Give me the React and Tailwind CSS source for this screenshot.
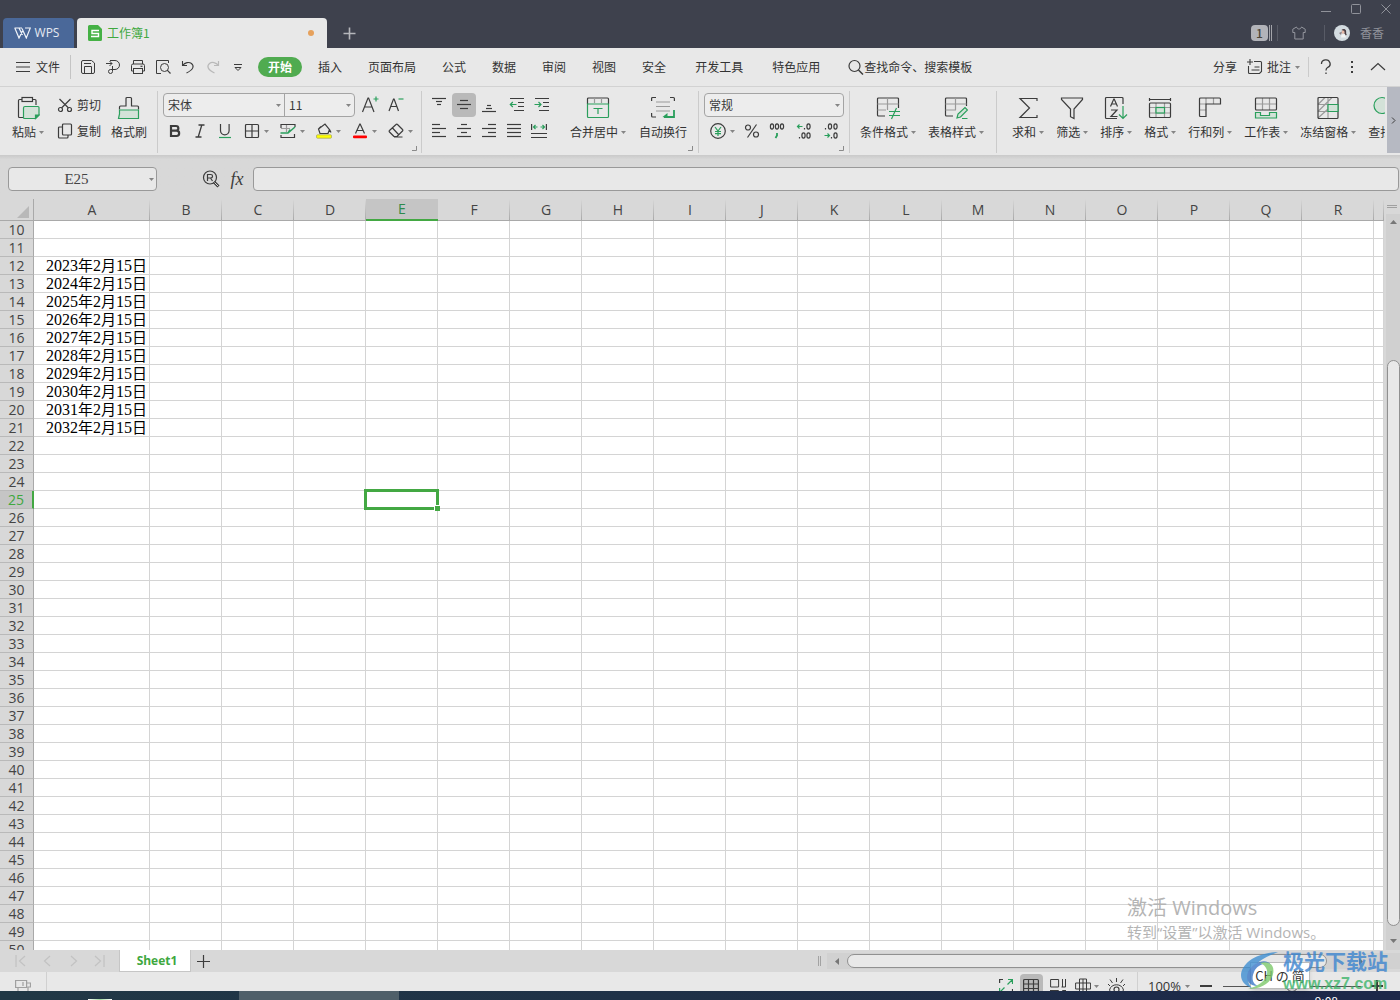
import React, { useState } from 'react';

const COLUMNS = ['A', 'B', 'C', 'D', 'E', 'F', 'G', 'H', 'I', 'J', 'K', 'L', 'M', 'N', 'O', 'P', 'Q', 'R', ''];
const ROWS = Array.from({ length: 41 }, (_, i) => i + 10);

const CELLS = {
  A12: '2023年2月15日',
  A13: '2024年2月15日',
  A14: '2025年2月15日',
  A15: '2026年2月15日',
  A16: '2027年2月15日',
  A17: '2028年2月15日',
  A18: '2029年2月15日',
  A19: '2030年2月15日',
  A20: '2031年2月15日',
  A21: '2032年2月15日',
};

const DARK = '#3c3c3c';
const GREEN = '#2a9f5c';
const GRAY = '#9a9a9a';
const MINT = '#d3e2d8';

const Icon = ({ w = 16, h = 16, children }) => (
  <svg
    width={w}
    height={h}
    viewBox={`0 0 ${w} ${h}`}
    fill="none"
    stroke={DARK}
    strokeWidth="1.2"
    className="shrink-0"
    aria-hidden="true"
  >
    {children}
  </svg>
);

const Caret = () => (
  <svg width="5" height="3" viewBox="0 0 5 3" className="shrink-0" aria-hidden="true">
    <path d="M0 0h5L2.5 3z" fill="#858585" />
  </svg>
);

const Corner = () => (
  <svg width="5" height="5" viewBox="0 0 5 5" className="mt-0.5 self-end" aria-hidden="true">
    <path d="M4.5 0v4.5H0" fill="none" stroke="#8a8a8a" />
  </svg>
);

const Divider = ({ className = '' }) => (
  <div className={`mt-1 h-[62px] w-px shrink-0 bg-[#cbcbcb] ${className}`} />
);

const Group = ({ children, corner, className = '' }) => (
  <div className={`flex shrink-0 flex-col pt-1.5 ${className}`}>
    <div className="flex h-[51px] items-start">{children}</div>
    {corner && <Corner />}
  </div>
);

const BigButton = ({ label, icon, caret = true }) => (
  <button className="flex shrink-0 flex-col items-center px-1.5 pt-[3px]">
    {icon}
    <span className="flex h-6 items-center gap-[3px] whitespace-nowrap">
      {label}
      {caret && <Caret />}
    </span>
  </button>
);

const IconButton = ({ label, active, wide, children }) => (
  <button
    aria-label={label}
    className={`flex h-6 shrink-0 items-center justify-center rounded ${wide ? 'w-7' : 'w-6'} ${
      active ? 'bg-[#b9b9b9]' : ''
    }`}
  >
    {children}
  </button>
);

const CaretButton = ({ label, children }) => (
  <button aria-label={label} className="flex h-6 shrink-0 items-center gap-1 pl-1.5 pr-1">
    {children}
    <Caret />
  </button>
);

const Combo = ({ label, options, className }) => (
  <div className={`relative h-6 ${className}`}>
    <select
      aria-label={label}
      className="h-full w-full appearance-none bg-transparent pl-1 text-xs text-[#3a3a3a] outline-none"
    >
      {options.map((option) => (
        <option key={option}>{option}</option>
      ))}
    </select>
    <span className="pointer-events-none absolute inset-y-0 right-[3px] flex items-center">
      <Caret />
    </span>
  </div>
);

const TitleBar = () => (
  <header className="flex h-12 shrink-0 bg-[#3e414d]">
    <div className="flex items-end pl-[3px]">
      <button className="flex h-[30px] w-[71px] items-center justify-center gap-1 rounded-t bg-[#4a6899] pr-1 font-['Open_Sans',sans-serif] text-xs text-[#e6eaf2]">
        <svg width="17" height="12" viewBox="0 0 17 12" fill="none" stroke="#f1f4f9" strokeWidth="1.2" aria-hidden="true">
          <path d="M.5 1h7.500M11 1h5.300l-4 10L8 1.500M.8 1L5 11l3.500-7M5 1l3.500 7" />
        </svg>
        WPS
      </button>
      <div className="ml-[3px] flex h-[30px] w-[250px] items-center rounded-t bg-[#e8e8e8] pl-[11px] pr-[13px]">
        <svg width="14" height="16" viewBox="0 0 14 16" aria-hidden="true">
          <path d="M1.500 0H10l4 4v10.500a1.500 1.500 0 0 1-1.500 1.500h-11A1.500 1.500 0 0 1 0 14.500v-13A1.500 1.500 0 0 1 1.500 0z" fill="#45b145" />
          <path d="M11 5.500H4v3h6.500v3H3" fill="none" stroke="#fff" strokeWidth="1.400" />
        </svg>
        <span className="ml-[5px] text-xs text-[#3fa83f]">工作簿1</span>
        <span className="ml-auto h-1.5 w-1.5 rounded-full bg-[#e6a15c]" />
      </div>
      <button aria-label="新建标签" className="ml-4 flex h-[30px] items-center">
        <Icon w={13} h={13}>
          <path d="M6.500 .5v12M.5 6.500h12" stroke="#b5b6bb" strokeWidth="1.600" />
        </Icon>
      </button>
    </div>
    <div className="ml-auto flex flex-col pr-[9px]">
      <div className="flex h-[18px] items-center justify-end gap-5">
        <button aria-label="最小化">
          <Icon w={10} h={10}><path d="M0 7.500h10" stroke="#90929a" strokeWidth="1" /></Icon>
        </button>
        <button aria-label="最大化">
          <Icon w={10} h={10}><rect x=".5" y=".5" width="9" height="9" rx="1" stroke="#90929a" strokeWidth="1" /></Icon>
        </button>
        <button aria-label="关闭">
          <Icon w={10} h={10}><path d="M.5 .5l9 9M9.500 .5l-9 9" stroke="#90929a" strokeWidth="1" /></Icon>
        </button>
      </div>
      <div className="flex flex-1 items-center justify-end pr-[7px]">
        <span className="flex h-4 w-[17px] items-center justify-center rounded-sm bg-[#b2b3b9] text-xs font-medium text-[#4b4538]">1</span>
        <span className="ml-px h-4 w-[3px] border-x border-[#a3a4aa]" />
        <span className="ml-[5px] h-4 w-px bg-[#585b66]" />
        <button aria-label="皮肤" className="ml-3.5">
          <Icon w={14} h={14}>
            <path
              d="M4.500 1L.8 3.200v3.300h2V13h8.400V6.500h2V3.200L9.500 1C9 2.600 8 3 7 3S5 2.600 4.500 1z"
              stroke="#94969e"
              strokeWidth="1"
            />
          </Icon>
        </button>
        <span className="ml-[18px] h-4 w-px bg-[#585b66]" />
        <svg width="16" height="16" viewBox="0 0 16 16" className="ml-[9px]" aria-hidden="true">
          <circle cx="8" cy="8" r="8" fill="#d3dbe0" />
          <path d="M7.500 5c1.500-1.800 4-1.200 4.500.6.500 1.600-.3 3 .8 4.400l-2 .5-.8-4z" fill="#4a3d42" />
          <path d="M8 5.500l2.300.2.200 2.600-2 .8-.8-1.600z" fill="#e6b9a8" />
          <path d="M5 8l3-1.500L7 10z" fill="#8d7f84" />
          <path d="M7.500 9.500l3.500-.5 1 3.500H7z" fill="#f3f3f3" />
        </svg>
        <span className="ml-2.5 text-xs text-[#8f919a]">香香</span>
      </div>
    </div>
  </header>
);

const TABS = ['插入', '页面布局', '公式', '数据', '审阅', '视图', '安全', '开发工具', '特色应用'];

const MenuBar = () => (
  <nav className="flex h-[39px] shrink-0 items-center border-b border-[#d2d2d2] bg-[#e8e8e8] pl-4 pr-3.5">
    <button className="flex items-center gap-1 whitespace-nowrap">
      <Icon><path d="M0 3.500h14M0 8h14M0 12.500h14" strokeWidth="1" /></Icon>
      文件
    </button>
    <span className="ml-2.5 mr-1 h-6 w-px bg-[#c4c4c4]" />
    <button aria-label="保存" className="flex w-[25px] justify-center">
      <Icon>
        <path d="M1.500 3A1.500 1.500 0 0 1 3 1.500h8.500L14.500 4v9a1.500 1.500 0 0 1-1.500 1.500H3A1.500 1.500 0 0 1 1.500 13z" strokeWidth="1" />
        <path d="M4 4.500h7M4.500 14V7.500h7V14" strokeWidth="1" />
      </Icon>
    </button>
    <button aria-label="输出为PDF" className="flex w-[25px] justify-center">
      <Icon>
        <path d="M1 4.500h6M4.500 2l2.500 2.500L4.500 7M5 1.500h5a4.500 4.500 0 0 1 0 9H7.500V7M7.500 9.500v3a2 2 0 1 1-2-2h2" strokeWidth="1" />
      </Icon>
    </button>
    <button aria-label="打印" className="flex w-[25px] justify-center">
      <Icon>
        <path d="M3.500 5V1.500h9V5M3.500 12H1.500V6.500A1.500 1.500 0 0 1 3 5h10a1.500 1.500 0 0 1 1.500 1.500V12h-2" strokeWidth="1" />
        <rect x="3.500" y="9.500" width="9" height="5" strokeWidth="1" />
        <path d="M10.500 7.300h2" />
      </Icon>
    </button>
    <button aria-label="打印预览" className="flex w-[25px] justify-center">
      <Icon>
        <path d="M6 14.500H1.500v-13h12V4" strokeWidth="1" />
        <circle cx="9.500" cy="8.500" r="4" strokeWidth="1" />
        <path d="M12.200 11.200l3.300 3.300" />
      </Icon>
    </button>
    <button aria-label="撤销" className="flex w-[25px] justify-center">
      <Icon><path d="M2.500 2v4.500H7M2.500 6.500C5 3.500 9 2.500 11.500 4.500c3 2.500 2 6-5 9.500" strokeWidth="1.100" /></Icon>
    </button>
    <button aria-label="恢复" className="flex w-[25px] justify-center">
      <Icon><path d="M13.500 2v4.500H9M13.500 6.500C11 3.500 7 2.500 4.500 4.500c-3 2.500-2 6 5 9.500" stroke="#b9b9b9" /></Icon>
    </button>
    <button aria-label="自定义快速访问" className="flex w-[25px] justify-center">
      <Icon><path d="M4 5.500h8M5 8.500h6L8 11.500z" strokeWidth="1" /></Icon>
    </button>
    <button className="ml-2 flex h-5 w-11 items-center justify-center whitespace-nowrap rounded-full bg-[#50ab50] font-bold text-white">
      开始
    </button>
    <div className="ml-[3px] flex">
      {TABS.map((tab) => (
        <button key={tab} className={`whitespace-nowrap ${tab === '开发工具' ? 'px-4' : 'px-[13px]'}`}>
          {tab}
        </button>
      ))}
    </div>
    <label className="ml-[15px] flex min-w-0 items-center">
      <Icon>
        <circle cx="6.500" cy="7" r="5.500" />
        <path d="M10.500 11l4.500 4.500" strokeWidth="1.500" />
      </Icon>
      <input
        aria-label="查找命令"
        placeholder="查找命令、搜索模板"
        className="w-32 min-w-0 bg-transparent text-xs outline-none placeholder:text-[#333]"
      />
    </label>
    <div className="ml-auto flex items-center whitespace-nowrap">
      <button>分享</button>
      <button className="ml-2.5 flex items-center gap-1">
        <Icon>
          <path d="M7 2.500h6.500a1 1 0 0 1 1 1v9l-2 2h-10a1 1 0 0 1-1-1V7M3 0v6M0 3h6M7.500 8h5M4.500 11h8" strokeWidth="1.100" />
        </Icon>
        批注
        <Caret />
      </button>
      <span className="ml-2 h-5 w-px bg-[#cbcbcb]" />
      <button aria-label="帮助" className="ml-[9px]">
        <Icon>
          <path d="M3.500 5a4.300 4 0 1 1 6 3.500C8.300 9.200 8 9.800 8 11.500M8 13.500v1.500" strokeWidth="1.300" />
        </Icon>
      </button>
      <button aria-label="更多" className="ml-2.5">
        <Icon><path d="M8 2v2M8 7v2M8 12v2" strokeWidth="2" /></Icon>
      </button>
      <button aria-label="收起功能区" className="ml-2.5">
        <Icon><path d="M1 11l7-6.500L15 11" /></Icon>
      </button>
    </div>
  </nav>
);

// x positions of the bars in an alignment icon, one [from, to] pair per line
const Lines = ({ rows, top = 1, step = 4 }) => (
  <Icon>
    {rows.map(([a, b], i) => (
      <path key={i} d={`M${a} ${top + i * step + 0.5}h${b - a}`} />
    ))}
  </Icon>
);

const Ribbon = () => (
  <div className="flex h-[68px] shrink-0 bg-[#e8e8e8]">
    <div className="mr-0.5 flex min-w-0 flex-1 overflow-hidden pl-1.5">
      <Group>
        <BigButton
          label="粘贴"
          icon={
            <Icon w={24} h={24}>
              <path d="M7 21.500H3.500a1 1 0 0 1-1-1V4.500a1 1 0 0 1 1-1H6M16.500 3.500h2.500a1 1 0 0 1 1 1V9" />
              <rect x="6" y="1.500" width="10.500" height="4" />
              <path d="M7.500 12a1.500 1.500 0 0 1 1.500-1.500h13a1 1 0 0 1 1 1V19l-3.500 3.500H8.500a1 1 0 0 1-1-1z" fill={MINT} stroke={GREEN} />
              <path d="M23 19l-3.500 3.500V19z" fill={GREEN} stroke={GREEN} />
            </Icon>
          }
        />
        <div className="flex flex-col gap-0.5 pl-[7px] pr-1">
          <button className="flex h-6 items-center gap-1 whitespace-nowrap">
            <Icon>
              <path d="M2.500 2l9 9M13.500 2l-9 9" />
              <circle cx="3.500" cy="12.500" r="2" />
              <circle cx="12.500" cy="12.500" r="2" />
            </Icon>
            剪切
          </button>
          <button className="flex h-6 items-center gap-1 whitespace-nowrap">
            <Icon>
              <rect x="5.500" y="1" width="9" height="11" rx="1" />
              <path d="M5.500 4H2.500a1 1 0 0 0-1 1v9a1 1 0 0 0 1 1H10a1 1 0 0 0 1-1v-2" />
            </Icon>
            复制
          </button>
        </div>
        <BigButton
          label="格式刷"
          caret={false}
          icon={
            <Icon w={24} h={24}>
              <path d="M2.500 13.500V11a1 1 0 0 1 1-1H9V2.500a1 1 0 0 1 1-1h3.500a1 1 0 0 1 1 1V10h6a1 1 0 0 1 1 1v2.500" />
              <path d="M2.500 14h19v8.500H1.500L2.500 18z" fill={MINT} stroke={GREEN} />
            </Icon>
          }
        />
      </Group>
      <Divider className="ml-1" />

      <Group corner className="ml-[5px]">
        <div className="flex flex-col gap-0.5">
          <div className="flex items-center">
            <div className="flex h-6 items-center rounded border border-[#a4a4a4] bg-[#ededed]">
              <Combo label="字体" options={['宋体']} className="w-[120px]" />
              <span className="h-full w-px bg-[#a4a4a4]" />
              <Combo label="字号" options={['11']} className="w-[69px]" />
            </div>
            <div className="ml-[3px] flex gap-0.5">
              <IconButton label="增大字号">
                <Icon w={18} h={18}>
                  <path d="M1.500 16L7 2h.6L13 16M3.500 11h7.500" />
                  <path d="M12.500 3h5M15 .5v5" stroke={GREEN} />
                </Icon>
              </IconButton>
              <IconButton label="减小字号">
                <Icon w={18} h={18}>
                  <path d="M2 15L6.500 3h.6L11.500 15M3.800 10.500h6" />
                  <path d="M11.500 3h5" stroke={GREEN} />
                </Icon>
              </IconButton>
            </div>
          </div>
          <div className="flex gap-px">
            <IconButton label="加粗">
              <Icon><path d="M4 3h5a2.300 2.300 0 0 1 0 4.700H4zM4 7.700h5.500a2.600 2.600 0 0 1 0 5.300H4z" strokeWidth="2.200" /></Icon>
            </IconButton>
            <IconButton label="倾斜">
              <Icon><path d="M6.500 2h6M3.500 14h6M9.800 2L6.200 14" strokeWidth="1.300" /></Icon>
            </IconButton>
            <IconButton label="下划线">
              <Icon>
                <path d="M3.500 1v6.500a4.300 4.300 0 0 0 8.600 0V1" />
                <path d="M2 14.500h12" stroke={GREEN} />
              </Icon>
            </IconButton>
            <CaretButton label="边框">
              <Icon>
                <rect x="1.500" y="1.500" width="13" height="13" rx="1" />
                <path d="M8 1.500v13M1.500 8h13" />
              </Icon>
            </CaretButton>
            <CaretButton label="绘图边框">
              <Icon>
                <path d="M15 4V1.500H1V5M1 12v2.500h13.500V11" />
                <path d="M6.500 2v7M1 5.500h9" stroke={GRAY} />
                <path d="M.5 10h7.500l7-6M8 10l2-3.500" stroke={GREEN} strokeWidth="1.500" />
              </Icon>
            </CaretButton>
            <CaretButton label="填充颜色">
              <Icon>
                <path d="M4 10.500h8l1.500-4L9 1 2.500 6zM2.500 6L5 3.500M13.500 6.500l1.500 3" />
                <rect x=".5" y="11.800" width="15" height="3.400" rx="1" fill="#ffff00" stroke="#a9a96a" strokeWidth=".8" />
              </Icon>
            </CaretButton>
            <CaretButton label="字体颜色">
              <Icon>
                <path d="M3.500 10.500L7.800 1h.4l4.300 9.500M5 7.500h6" />
                <rect x="1" y="12.500" width="14" height="2.800" rx="1" fill="#ff0000" stroke="none" />
              </Icon>
            </CaretButton>
            <CaretButton label="清除">
              <Icon>
                <path d="M6 13.500L1.500 9a1 1 0 0 1 0-1.500L8 1.500a1 1 0 0 1 1.500 0l5 5a1 1 0 0 1 0 1.500L9 13.500zM4.500 5l6 6.500M6 14h8.500" />
              </Icon>
            </CaretButton>
          </div>
        </div>
      </Group>
      <Divider className="ml-1" />

      <Group corner className="ml-[5px]">
        <div className="flex flex-col gap-0.5">
          <div className="flex gap-px">
            <IconButton label="顶端对齐"><Lines rows={[[1, 15], [5, 11], [6, 10]]} step={3} /></IconButton>
            <IconButton label="垂直居中" active><Lines rows={[[4, 12], [1, 15], [4, 12]]} top={3} /></IconButton>
            <IconButton label="底端对齐"><Lines rows={[[6, 10], [5, 11], [1, 15]]} top={8} step={3} /></IconButton>
            <div className="ml-[3px] flex gap-px">
              <IconButton label="减少缩进">
                <Icon>
                  <path d="M1 1.500h14M9 5.500h6M9 9.500h6M5 13.500h10" />
                  <path d="M7.500 7.500H1.500M3.800 5L1.300 7.500 3.800 10" stroke={GREEN} />
                </Icon>
              </IconButton>
              <IconButton label="增加缩进">
                <Icon>
                  <path d="M1 1.500h14M9 5.500h6M9 9.500h6M5 13.500h10" />
                  <path d="M.5 7.500h6M4.500 5L7 7.500 4.500 10" stroke={GREEN} />
                </Icon>
              </IconButton>
            </div>
          </div>
          <div className="flex gap-px">
            <IconButton label="左对齐"><Lines rows={[[1, 9], [1, 15], [1, 9], [1, 15]]} /></IconButton>
            <IconButton label="居中"><Lines rows={[[5, 11], [1, 15], [5, 11], [1, 15]]} /></IconButton>
            <IconButton label="右对齐"><Lines rows={[[7, 15], [1, 15], [7, 15], [1, 15]]} /></IconButton>
            <IconButton label="两端对齐"><Lines rows={[[1, 15], [1, 15], [1, 15], [1, 15]]} /></IconButton>
            <IconButton label="分散对齐">
              <Icon>
                <path d="M.6 1v6M15.400 1v6M0 10.500h16M0 14.500h16" />
                <path d="M2.500 4h4M9.500 4h4M4.500 2L2.500 4l2 2M11.500 2l2 2-2 2" stroke={GREEN} />
              </Icon>
            </IconButton>
          </div>
        </div>
        <div className="ml-2.5 flex gap-px">
          <BigButton
            label="合并居中"
            icon={
              <Icon w={24} h={24}>
                <path d="M1.500 8V3a1 1 0 0 1 1-1h19a1 1 0 0 1 1 1v5" />
                <path d="M8.500 2v5M15.500 2v5" stroke={GRAY} />
                <path d="M1.500 8h21v12.500a1 1 0 0 1-1 1h-19a1 1 0 0 1-1-1zM7.500 12.500h9M12 12.500V18" stroke={GREEN} />
              </Icon>
            }
          />
          <BigButton
            label="自动换行"
            caret={false}
            icon={
              <Icon w={24} h={24}>
                <path d="M.6 5V2.500a1 1 0 0 1 1-1H5M19 1.500h3.400a1 1 0 0 1 1 1V5M.6 17v3a1 1 0 0 0 1 1H5" />
                <path d="M5 6h14M5 10.500h14M5 15h14" stroke={GRAY} />
                <path d="M23 14v7H13" stroke={GREEN} strokeWidth="1.800" />
                <path d="M11.500 21l5-4v4.900z" fill={GREEN} stroke="none" />
              </Icon>
            }
          />
        </div>
      </Group>
      <Divider className="ml-[5px]" />

      <Group corner className="ml-[5px]">
        <div className="flex flex-col gap-0.5">
          <div className="flex h-6 items-center rounded border border-[#a4a4a4] bg-[#ededed]">
            <Combo label="数字格式" options={['常规']} className="w-[138px]" />
          </div>
          <div className="flex gap-px">
            <CaretButton label="货币">
              <Icon>
                <circle cx="8" cy="8" r="7.300" />
                <path d="M5 4l3 4 3-4M8 8v5M5 8.500h6M5 10.700h6" stroke={GREEN} />
              </Icon>
            </CaretButton>
            <IconButton label="百分比">
              <Icon>
                <circle cx="4" cy="4.500" r="2.500" />
                <circle cx="12" cy="11.500" r="2.500" />
                <path d="M12.500 1.500l-9 13" />
              </Icon>
            </IconButton>
            <IconButton label="千位分隔">
              <Icon>
                <ellipse cx="3" cy="3.500" rx="1.600" ry="2.700" />
                <ellipse cx="8" cy="3.500" rx="1.600" ry="2.700" />
                <ellipse cx="13" cy="3.500" rx="1.600" ry="2.700" />
                <path d="M8 10v2.500L6.500 15" stroke={GREEN} strokeWidth="1.800" />
              </Icon>
            </IconButton>
            <IconButton label="增加小数位" wide>
              <Icon>
                <ellipse cx="12.500" cy="3.500" rx="1.600" ry="2.700" />
                <ellipse cx="7.500" cy="12.500" rx="1.600" ry="2.700" />
                <ellipse cx="12.500" cy="12.500" rx="1.600" ry="2.700" />
                <path d="M8.500 5v1.500M3.500 14v1.500" />
                <path d="M6.500 3.500H1.500M3.500 1.500l-2 2 2 2" stroke={GREEN} />
              </Icon>
            </IconButton>
            <IconButton label="减少小数位">
              <Icon>
                <ellipse cx="7" cy="3.500" rx="1.600" ry="2.700" />
                <ellipse cx="12.500" cy="3.500" rx="1.600" ry="2.700" />
                <ellipse cx="12.500" cy="12.500" rx="1.600" ry="2.700" />
                <path d="M2.500 5v1.500M8.500 14v1.500" />
                <path d="M1.500 12.500h5M4.500 10.500l2 2-2 2" stroke={GREEN} />
              </Icon>
            </IconButton>
          </div>
        </div>
      </Group>
      <Divider className="ml-[5px]" />

      <Group className="ml-1">
        <BigButton
          label="条件格式"
          icon={
            <Icon w={24} h={24}>
              <path d="M22.500 12V3a1 1 0 0 0-1-1h-19a1 1 0 0 0-1 1v16a1 1 0 0 0 1 1H9" />
              <path d="M1.500 8h21M1.500 14H10M11.500 2v12" stroke={GRAY} />
              <path d="M13 15.500h11M13 19.500h11M20.500 12l-5 11" stroke={GREEN} />
            </Icon>
          }
        />
        <BigButton
          label="表格样式"
          icon={
            <Icon w={24} h={24}>
              <path d="M22.500 10V3a1 1 0 0 0-1-1h-19a1 1 0 0 0-1 1v16a1 1 0 0 0 1 1H9" />
              <path d="M1.500 8h21M1.500 14H12M11.500 2v12" stroke={GRAY} />
              <path d="M13 22l1-4 7-6.500 2.500 2.500-7 7zM18 22.500h5.500" fill={MINT} stroke={GREEN} />
            </Icon>
          }
        />
      </Group>
      <Divider className="ml-1.5" />

      <Group className="ml-[9px]">
        <BigButton
          label="求和"
          icon={
            <Icon w={24} h={24}>
              <path d="M21 5V2.500H4L13.500 12 4 21.500h17V19" />
            </Icon>
          }
        />
        <BigButton
          label="筛选"
          icon={
            <Icon w={24} h={24}>
              <path d="M1.500 2h21v1.500L14 13v9.500l-3.500-1.800V13L1.500 3.500z" />
            </Icon>
          }
        />
        <BigButton
          label="排序"
          icon={
            <Icon w={24} h={24}>
              <path d="M19 8V2.500a1 1 0 0 0-1-1H2.500a1 1 0 0 0-1 1v19a1 1 0 0 0 1 1H13" />
              <path d="M6.500 10.500L9.800 3h.4l3.300 7.500M7.800 8h4.500M7 14h6l-6 6.500h6.500" />
              <path d="M19 10v12.500M15 18.500l4 4 4-4" stroke={GREEN} />
            </Icon>
          }
        />
        <BigButton
          label="格式"
          icon={
            <Icon w={24} h={24}>
              <path d="M1 3.500h22M1.500 2v3M22.500 2v3" />
              <path d="M1.500 11.500h21M1.500 17h21M8 7v14.500M16.500 7v14.500" stroke={GRAY} />
              <rect x="1.500" y="7" width="21" height="14.500" rx="1" />
              <rect x="8" y="11.500" width="8.500" height="5.500" fill={MINT} stroke={GREEN} />
            </Icon>
          }
        />
        <BigButton
          label="行和列"
          icon={
            <Icon w={24} h={24}>
              <path d="M8 2v6H1.500M15.500 2v6M1.500 14H8" stroke={GRAY} />
              <path d="M1.500 3a1 1 0 0 1 1-1h19a1 1 0 0 1 1 1v5H8v12.500h-5.500a1 1 0 0 1-1-1z" />
            </Icon>
          }
        />
        <BigButton
          label="工作表"
          icon={
            <Icon w={24} h={24}>
              <path d="M8.500 2v12M15.500 2v12M1.500 8h21" stroke={GRAY} />
              <rect x="1.500" y="2" width="21" height="12" rx="1" />
              <path d="M1.500 16.500h5v3h9v-3h7v5.500h-21z" fill={MINT} stroke={GREEN} />
            </Icon>
          }
        />
        <BigButton
          label="冻结窗格"
          icon={
            <Icon w={24} h={24}>
              <path d="M2 8.500h20M2 15.500h20M12 1.500v21M2 8.500l7-7M2 15.500l14-14M2 22l10-9" stroke={GRAY} />
              <rect x="2" y="1.500" width="20" height="21" rx="1" />
              <path d="M12 8.500h10v7H12z" fill={MINT} stroke={GREEN} />
            </Icon>
          }
        />
        <BigButton
          label="查找"
          icon={
            <Icon w={24} h={24}>
              <circle cx="10" cy="9.500" r="8" fill={MINT} stroke={GREEN} />
              <path d="M16 16l6 6" />
            </Icon>
          }
        />
      </Group>
    </div>
    <button aria-label="展开更多" className="mb-0.5 flex w-[13px] shrink-0 items-center justify-center bg-[#b6b9c2]">
      <Icon w={5} h={7}><path d="M1 .5l3 3-3 3" strokeWidth="1" /></Icon>
    </button>
  </div>
);

const FormulaBar = () => (
  <div className="flex h-11 shrink-0 items-start bg-linear-to-b from-[#c9c9c9] to-[#d8d8d8] to-10% pl-2 pr-px pt-3">
    <div className="relative w-[149px]">
      <input
        aria-label="名称框"
        defaultValue="E25"
        className="h-6 w-full rounded border border-[#999] bg-[#e8e8e8] pr-3 text-center font-['Liberation_Serif',serif] text-[15px] text-[#444] outline-none"
      />
      <span className="pointer-events-none absolute inset-y-0 right-[3px] flex items-center">
        <Caret />
      </span>
    </div>
    <button aria-label="查找引用" className="ml-[45px] flex h-6 items-center">
      <Icon w={18} h={18}>
        <circle cx="8" cy="7.500" r="6.500" />
        <path d="M5.500 11V4.500h3.300a1.700 1.700 0 0 1 0 3.500H5.500M8.500 8l2 3" />
        <path d="M12 12l4.500 4.500" strokeWidth="3" />
        <path d="M12.500 12.500l3.500 3.500" stroke="#d8d8d8" strokeWidth="1" />
      </Icon>
    </button>
    <button aria-label="插入函数" className="ml-[5px] flex h-6 w-6 items-center justify-center font-['Liberation_Serif',serif] text-lg italic text-[#3c3c3c]">
      fx
    </button>
    <input aria-label="编辑栏" className="ml-1 h-6 min-w-0 flex-1 rounded border border-[#999] bg-[#e8e8e8] px-2 outline-none" />
  </div>
);

// digits are set a size up from the characters between them
const CellText = ({ value }) => (
  <div className="h-[17px]">
    {value.split(/(\d+)/).map((part, i) => (
      <span key={i} className={i % 2 ? 'text-base leading-[17px]' : ''}>
        {part}
      </span>
    ))}
  </div>
);

const Sheet = () => {
  const [selected] = useState({ col: 'E', row: 25 });

  return (
    <div className="relative min-w-0 flex-1 overflow-hidden bg-white">
      <table className="w-full table-fixed border-separate border-spacing-0 font-['Open_Sans',sans-serif]">
        <colgroup>
          <col className="w-[34px]" />
          {COLUMNS.map((name) => (
            <col key={name} className={name === 'A' ? 'w-[116px]' : name ? 'w-[72px]' : ''} />
          ))}
        </colgroup>
        <thead>
          <tr className="h-[22px] bg-[#d8d8d8]">
            <th className="border-b border-r border-[#a9a9a9] p-0">
              <svg width="12" height="12" viewBox="0 0 12 12" className="ml-auto mr-1 mt-1" aria-hidden="true">
                <path d="M12 0v12H0z" fill="#b8b8b8" />
              </svg>
            </th>
            {COLUMNS.map((name) => (
              <th
                key={name}
                className={`p-0 text-sm leading-5 font-normal ${
                  name === selected.col
                    ? 'border-b-2 border-[#43a843] bg-[#c5c5c5] text-[#2d8a4b]'
                    : 'border-b border-[#a9a9a9] bg-linear-to-b from-[#d8d8d8] to-[#a9a9a9] bg-[length:1px_100%] bg-right bg-no-repeat text-[#444]'
                }`}
              >
                {name}
              </th>
            ))}
          </tr>
        </thead>
        <tbody>
          {ROWS.map((row) => (
            <tr key={row} className="h-[18px]">
              <th
                className={`h-[18px] p-0 text-sm leading-[17px] font-normal ${
                  row === selected.row
                    ? 'border-b border-r-2 border-b-[#b9b9b9] border-r-[#43a843] bg-[#c5c5c5] text-[#3fa83f]'
                    : 'border-b border-r border-b-[#b9b9b9] border-r-[#a9a9a9] bg-[#d8d8d8] text-[#444]'
                }`}
              >
                {row}
              </th>
              {COLUMNS.map((name) => {
                const value = CELLS[`${name}${row}`];
                const active = name === selected.col && row === selected.row;
                return (
                  <td
                    key={name}
                    className="relative h-[18px] whitespace-nowrap border-b border-r border-[#d4d4d4] p-0 pr-0.5 text-right font-['Liberation_Serif','Noto_Sans_CJK_SC',serif] text-[15px] leading-[17px] text-black"
                  >
                    {value && <CellText value={value} />}
                    {active && (
                      <span className="absolute -inset-0.5 z-10 border-[3px] border-[#43a843]">
                        <span className="absolute -bottom-1 -right-1 h-1.5 w-1.5 border-l border-t border-white bg-[#43a843]" />
                      </span>
                    )}
                  </td>
                );
              })}
            </tr>
          ))}
        </tbody>
      </table>
      <div className="pointer-events-none absolute bottom-2 right-[54px] w-[203px] whitespace-nowrap font-['Open_Sans','Noto_Sans_CJK_SC',sans-serif] text-[#b4b4b4]">
        <p className="text-xl leading-7">激活 Windows</p>
        <p className="text-[15px] leading-5">转到“设置”以激活 Windows。</p>
      </div>
    </div>
  );
};

const VerticalScroll = () => (
  <div className="flex w-4 shrink-0 flex-col items-end bg-[#d8d8d8]">
    <div className="flex h-[15px] w-full items-center justify-center">
      <span className="h-[3px] w-2.5 border-y border-[#a0a0a0]" />
    </div>
    <div className="flex w-3.5 flex-1 flex-col items-center bg-[#d0d0d0]">
      <svg width="7" height="4" viewBox="0 0 7 4" className="mt-1.5" aria-hidden="true">
        <path d="M0 4h7L3.500 0z" fill="#777" />
      </svg>
      <div className="flex-[136]" />
      <div className="w-[13px] flex-[566] rounded-full border border-[#909090] bg-[#e8e8e8]" />
      <svg width="7" height="4" viewBox="0 0 7 4" className="mb-[7px] mt-[13px]" aria-hidden="true">
        <path d="M0 0h7L3.500 4z" fill="#777" />
      </svg>
    </div>
  </div>
);

const NAV = [
  ['第一张', 'M1 2v12M10 3L4.500 8l5.500 5'],
  ['上一张', 'M9 3L3.500 8 9 13'],
  ['下一张', 'M4 3l5.500 5L4 13'],
  ['最后一张', 'M11 2v12M2 3l5.500 5L2 13'],
];

const SheetTabs = () => (
  <div className="flex h-[22px] shrink-0 items-stretch bg-[#d8d8d8]">
    <div className="flex w-[119px] items-center gap-3.5 pl-[15px]">
      {NAV.map(([label, d]) => (
        <button key={label} aria-label={label}>
          <Icon w={12}><path d={d} stroke="#c2c2c2" /></Icon>
        </button>
      ))}
    </div>
    <button className="w-[72px] border border-t-0 border-[#c6c6c6] bg-white pl-1 font-['Open_Sans',sans-serif] text-xs font-bold text-[#3fa83f]">
      Sheet1
    </button>
    <button aria-label="新建工作表" className="ml-1.5 flex items-center">
      <Icon w={13} h={13}><path d="M6.500 0v13M0 6.500h13" /></Icon>
    </button>
    <div className="ml-auto flex w-[583px] items-center">
      <span className="ml-px h-2.5 w-[3px] border-x border-[#a3a3a3]" />
      <div className="ml-1.5 flex h-4 flex-1 items-center bg-[#d1d1d1]">
        <svg width="4" height="7" viewBox="0 0 4 7" className="ml-2" aria-hidden="true">
          <path d="M4 0v7L0 3.500z" fill="#777" />
        </svg>
        <div className="ml-2 h-3.5 w-[480px] rounded-full border border-[#909090] bg-[#e8e8e8]" />
        <svg width="4" height="7" viewBox="0 0 4 7" className="ml-8" aria-hidden="true">
          <path d="M0 0v7l4-3.500z" fill="#777" />
        </svg>
      </div>
    </div>
  </div>
);

const StatusBar = () => (
  <footer className="h-[19px] shrink-0 overflow-hidden bg-[#e8e8e8]">
    <div className="flex h-7 items-center pl-[15px] pr-[17px]">
      <Icon w={16} h={14}>
        <path d="M.6 1.500h11v7H.6zM3 9v3.500h10M8 3v4M12 4h3.500v4H13v4M7 13.500h6" stroke="#a0a0a0" />
      </Icon>
      <span className="ml-[15px] h-7 w-px bg-[#d0d0d0]" />
      <button aria-label="全屏显示" className="ml-auto">
        <Icon w={14}>
          <path d="M9 1.500h4.500V6M8.500 6.500l5-5M5 14.500H.6V10M5.500 9.500l-5 5" stroke={GREEN} />
          <path d="M.6 5V1.500H4M13.500 11v3.500H10" />
        </Icon>
      </button>
      <button aria-label="普通视图" className="ml-[7px] flex h-6 w-[23px] items-center justify-center rounded bg-[#b9b9b9]">
        <Icon>
          <rect x=".6" y="1.500" width="14.800" height="13" rx="1" />
          <path d="M5.500 1.500v13M10.500 1.500v13M.6 6h15M.6 10.500h15" />
        </Icon>
      </button>
      <button aria-label="分页预览" className="ml-[7px]">
        <Icon>
          <path d="M.6 1.500h8V9h-8zM12.500 1v8M15.500 1v8h-4M0 12.500h8.500V16M12.500 16v-3.500H16" strokeWidth="1" />
        </Icon>
      </button>
      <button aria-label="页面布局视图" className="ml-[9px] flex items-center gap-[3px]">
        <Icon>
          <path d="M4.500 1h7v14h-7zM.6 5h15v6H.6zM8 1v14" strokeWidth="1" />
        </Icon>
        <Caret />
      </button>
      <button aria-label="护眼模式" className="ml-[9px]">
        <Icon w={17} h={16}>
          <path d="M1.500 12C3 5 14 5 15.500 12 14 17 3 17 1.500 12zM8.500 4V0M4.500 5L2 1.500M12.500 5L15 1.500M2 8L0 6M15 8l2-2" strokeWidth="1" />
          <circle cx="8.500" cy="11.500" r="2.500" />
        </Icon>
      </button>
      <span className="ml-3 h-7 w-px bg-[#d0d0d0]" />
      <button className="ml-2.5 flex items-center gap-1 font-['Open_Sans',sans-serif] text-[13px] leading-4">
        100%
        <Caret />
      </button>
      <button aria-label="缩小" className="ml-2.5">
        <Icon w={12}><path d="M0 8h12" strokeWidth="2" /></Icon>
      </button>
      <input
        type="range"
        aria-label="显示比例"
        className="ml-[11px] h-px w-[138px] appearance-none bg-[#555] [&::-webkit-slider-thumb]:h-3 [&::-webkit-slider-thumb]:w-3 [&::-webkit-slider-thumb]:appearance-none [&::-webkit-slider-thumb]:rounded-full [&::-webkit-slider-thumb]:border [&::-webkit-slider-thumb]:border-[#555] [&::-webkit-slider-thumb]:bg-[#e8e8e8]"
      />
      <button aria-label="放大" className="ml-2.5">
        <Icon w={12}><path d="M0 8h12M6 2v12" strokeWidth="2" /></Icon>
      </button>
    </div>
  </footer>
);

const Taskbar = () => (
  <div className="flex h-[9px] shrink-0 overflow-hidden bg-linear-to-r from-[#213845] to-[#1d2849]">
    <span className="ml-[88px] mt-2 h-4 w-6 bg-linear-to-r from-white via-[#9fd89f] to-white" />
    <span className="ml-[127px] w-40 bg-[#4f5f69]" />
    <span className="ml-auto mr-[62px] mt-1 text-xs leading-3 text-white">9:08</span>
  </div>
);

const Overlay = () => (
  <div className="pointer-events-none absolute bottom-0 right-0 z-20 flex h-[50px] w-40 items-start">
    <div className="absolute bottom-[11px] right-[90px] flex h-[27px] w-[60px] items-center justify-center border border-[#bbb] bg-white text-[13px] text-[#333] shadow-md">
      CH の 简
    </div>
    <svg width="42" height="40" viewBox="0 0 42 40" className="relative mt-0.5 opacity-80" aria-hidden="true">
      <path d="M38 0C16 1 2 11 1 23c0 6 4 11 11 13-6-6-5-13 1-20C19 8 28 4 38 0z" fill="#3f8fd2" />
      <path d="M8 20C14 9 27 6 31 13c-6-3-14 0-17 7s-1 12 4 14C9 34 5 28 8 20z" fill="#3a78c8" />
      <path d="M20 11c10-3 15 3 13 11-2 9-12 15-25 15 10-3 18-8 19-15 1-5-2-9-7-11z" fill="#7cc96b" />
    </svg>
    <div className="relative ml-px flex flex-col whitespace-nowrap font-bold opacity-80">
      <span className="h-6 text-[21px] leading-5 text-[#3d85cf]">极光下载站</span>
      <span className="font-['Liberation_Sans',sans-serif] text-base leading-5 text-[#3fb56a]">www.xz7.com</span>
    </div>
  </div>
);

export default function App() {
  return (
    <div className="relative flex h-screen flex-col overflow-hidden bg-[#d8d8d8] font-['Noto_Sans_CJK_SC',sans-serif] text-xs text-[#333]">
      <TitleBar />
      <MenuBar />
      <Ribbon />
      <FormulaBar />
      <main className="flex min-h-0 flex-1">
        <Sheet />
        <VerticalScroll />
      </main>
      <SheetTabs />
      <StatusBar />
      <Taskbar />
      <Overlay />
    </div>
  );
}
